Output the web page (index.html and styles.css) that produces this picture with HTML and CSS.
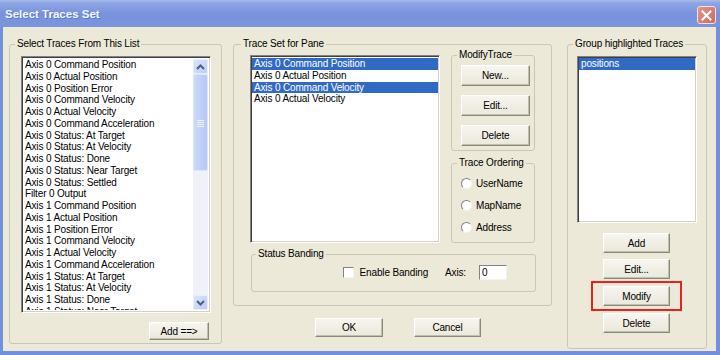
FILE: index.html
```html
<!DOCTYPE html>
<html lang="en">
  <head>
    <meta charset="utf-8" />
    <title>Select Traces Set</title>
    <link rel="stylesheet" href="styles.css">
  </head>
  <body>
    <div class="window">
      <div class="titlebar">
        <span class="title">Select Traces Set</span>
        <span class="close">
          <svg width="11" height="11" viewBox="0 0 11 11">
            <path d="M1.5 1.5 L9.5 9.5 M9.5 1.5 L1.5 9.5" stroke="#fff" stroke-width="2" stroke-linecap="square" />
          </svg>
        </span>
      </div>
      <div class="frame">
        <!-- left column: all available traces -->
        <fieldset class="group src">
          <legend>Select Traces From This List</legend>
          <div class="listbox src-list">
            <ul class="items">
              <li>Axis 0 Command Position</li>
              <li>Axis 0 Actual Position</li>
              <li>Axis 0 Position Error</li>
              <li>Axis 0 Command Velocity</li>
              <li>Axis 0 Actual Velocity</li>
              <li>Axis 0 Command Acceleration</li>
              <li>Axis 0 Status: At Target</li>
              <li>Axis 0 Status: At Velocity</li>
              <li>Axis 0 Status: Done</li>
              <li>Axis 0 Status: Near Target</li>
              <li>Axis 0 Status: Settled</li>
              <li>Filter 0 Output</li>
              <li>Axis 1 Command Position</li>
              <li>Axis 1 Actual Position</li>
              <li>Axis 1 Position Error</li>
              <li>Axis 1 Command Velocity</li>
              <li>Axis 1 Actual Velocity</li>
              <li>Axis 1 Command Acceleration</li>
              <li>Axis 1 Status: At Target</li>
              <li>Axis 1 Status: At Velocity</li>
              <li>Axis 1 Status: Done</li>
              <li>Axis 1 Status: Near Target</li>
            </ul>
            <div class="scrollbar">
              <div class="sb-btn">
                <svg width="9" height="6" viewBox="0 0 9 6"><path d="M1 5 L4.5 1.5 L8 5" fill="none" stroke="#4d6185" stroke-width="2" /></svg>
              </div>
              <div class="sb-thumb">
                <svg width="7" height="8" viewBox="0 0 7 8"><path d="M0 1.5 H7 M0 3.5 H7 M0 5.5 H7 M0 7.5 H7" stroke="#eef3fe" stroke-width="1" /></svg>
              </div>
              <div class="sb-track"></div>
              <div class="sb-btn">
                <svg width="9" height="6" viewBox="0 0 9 6"><path d="M1 1 L4.5 4.5 L8 1" fill="none" stroke="#4d6185" stroke-width="2" /></svg>
              </div>
            </div>
          </div>
          <div class="add-row">
            <button class="btn add">Add ==&gt;</button>
          </div>
        </fieldset>

        <!-- middle column: traces of the pane -->
        <div class="mid">
          <fieldset class="group pane">
            <legend>Trace Set for Pane</legend>
            <div class="pane-row">
              <ul class="listbox pane-list">
                <li class="sel">Axis 0 Command Position</li>
                <li>Axis 0 Actual Position</li>
                <li class="sel">Axis 0 Command Velocity</li>
                <li>Axis 0 Actual Velocity</li>
              </ul>
              <div class="side">
                <fieldset class="group modify">
                  <legend>ModifyTrace</legend>
                  <button class="btn side-btn">New...</button>
                  <button class="btn side-btn">Edit...</button>
                  <button class="btn side-btn">Delete</button>
                </fieldset>
                <fieldset class="group ordering">
                  <legend>Trace Ordering</legend>
                  <label class="radio"><span class="dot"></span>UserName</label>
                  <label class="radio"><span class="dot"></span>MapName</label>
                  <label class="radio"><span class="dot"></span>Address</label>
                </fieldset>
              </div>
            </div>
            <fieldset class="group banding">
              <legend>Status Banding</legend>
              <div class="banding-row">
                <span class="check"></span>
                <span class="check-label">Enable Banding</span>
                <span class="axis-label">Axis:</span>
                <span class="textbox">0</span>
              </div>
            </fieldset>
          </fieldset>
          <div class="dlg-buttons">
            <button class="btn ok">OK</button>
            <button class="btn cancel">Cancel</button>
          </div>
        </div>

        <!-- right column: trace groups -->
        <fieldset class="group groups">
          <legend>Group highlighted Traces</legend>
          <ul class="listbox group-list">
            <li class="sel">positions</li>
          </ul>
          <div class="group-buttons">
            <button class="btn grp-btn">Add</button>
            <button class="btn grp-btn">Edit...</button>
            <div class="marked">
              <button class="btn grp-btn">Modify</button>
            </div>
            <button class="btn grp-btn">Delete</button>
          </div>
        </fieldset>
      </div>
    </div>
  </body>
</html>
```

FILE: styles.css
```css
html,
body {
  margin: 0px;
  padding: 0px;
  overflow: hidden;
}
body {
  width: 720px;
  height: 355px;
  font-family: "Liberation Sans", Arial, sans-serif;
  font-size: 10px;
  letter-spacing: -0.15px;
  color: #000;
  background-color: #7893dc;
}
.window {
  width: 720px;
  height: 355px;
  display: flex;
  flex-direction: column;
}
.titlebar {
  height: 27px;
  flex: none;
  display: flex;
  align-items: center;
  justify-content: space-between;
  padding: 0px 4px 0px 5px;
  box-sizing: border-box;
  background: linear-gradient(#a9bbec 0px, #8ea5e4 3px, #7892dc 14px, #7b95dd 27px);
}
.title {
  color: #f4f7ff;
  font-size: 11.5px;
  font-weight: bold;
  letter-spacing: 0px;
  text-shadow: 1px 1px 0px #5f78c4;
  padding-top: 1px;
}
.close {
  width: 17px;
  height: 16px;
  margin-top: 3px;
  display: flex;
  align-items: center;
  justify-content: center;
  border: 1px solid #f1e2e0;
  border-radius: 3px;
  background: linear-gradient(135deg, #e0958b, #cf6b60);
}
.frame {
  flex: 1;
  display: flex;
  align-items: flex-start;
  gap: 0px;
  background-color: #ece9d8;
  border-left: 3px solid #7390dc;
  border-right: 4px solid #7390dc;
  border-bottom: 4px solid #7390dc;
  padding: 11px 9px 0px 6px;
}

/* group boxes */
.group {
  margin: 0px;
  min-width: 0px;
  border: 1px solid #cac7b6;
  border-radius: 3px;
  box-sizing: border-box;
}
.group legend {
  padding: 0px 2px;
  line-height: 12px;
  font-size: 10px;
}
.src {
  width: 213px;
  padding: 6px 10px 3px 11px;
}
.src legend {
  margin-left: -6px;
}
.mid {
  width: 319px;
  margin-left: 11px;
  display: flex;
  flex-direction: column;
}
.pane {
  width: 319px;
  padding: 5px 16px 13px 16px;
}
.pane legend {
  margin-left: -9px;
}
.groups {
  width: 140px;
  margin-left: 15px;
  padding: 6px 10px 15px 9px;
}
.groups legend {
  margin-left: -4px;
}

/* list boxes */
.listbox {
  margin: 0px;
  padding: 0px;
  list-style: none;
  background-color: #fff;
  border: 1px solid;
  border-color: #848284 #fff #fff #848284;
  box-shadow: inset 1px 1px 0px #404040, inset -1px -1px 0px #d4d0c8;
  box-sizing: border-box;
  overflow: hidden;
}
.listbox li {
  height: 11.75px;
  line-height: 11.75px;
  padding-left: 2px;
  white-space: nowrap;
}
.listbox li.sel {
  background-color: #316ac5;
  color: #fff;
}
.src-list {
  height: 257px;
  display: flex;
  padding: 2px;
}
.items {
  flex: 1;
  margin: 0px;
  padding: 0px;
  list-style: none;
  overflow: hidden;
}
.items li {
  padding-left: 1px;
}
.scrollbar {
  width: 15px;
  display: flex;
  flex-direction: column;
  background-color: #f1f2f9;
}
.sb-btn {
  height: 15px;
  flex: none;
  display: flex;
  align-items: center;
  justify-content: center;
  background: linear-gradient(135deg, #d9e4fd, #bccef8);
  border: 1px solid #e9eefc;
  border-radius: 2px;
  box-sizing: border-box;
}
.sb-thumb {
  height: 97px;
  flex: none;
  display: flex;
  align-items: center;
  justify-content: center;
  background: linear-gradient(90deg, #c9d8fc, #b7caf6);
  border: 1px solid #dfe7fc;
  border-radius: 2px;
  box-sizing: border-box;
}
.sb-track {
  flex: 1;
}
.add-row {
  display: flex;
  justify-content: flex-end;
  padding: 9px 2px 0px 0px;
}
.pane-row {
  display: flex;
  align-items: flex-start;
  gap: 11px;
}
.pane-list {
  width: 191px;
  height: 188px;
  padding: 2px 1px;
}
.side {
  width: 84px;
  margin-top: -6px;
  display: flex;
  flex-direction: column;
  gap: 6px;
}
.modify {
  width: 84px;
  padding: 4px 0px 4px 9px;
  display: flex;
  flex-direction: column;
  gap: 9px;
}
.modify legend,
.ordering legend {
  margin-left: -4px;
}
.ordering {
  width: 84px;
  padding: 3px 0px 4px 9px;
}
.radio {
  height: 22px;
  display: flex;
  align-items: center;
  gap: 4px;
}
.dot {
  width: 11px;
  height: 11px;
  border-radius: 50%;
  border: 1px solid;
  border-color: #848284 #f4f3ee #f4f3ee #848284;
  background-color: #fff;
  box-sizing: border-box;
  margin-top: 1px;
}
.banding {
  width: 285px;
  margin-top: 5px;
  margin-left: 1px;
  padding: 4px 28px 10px 6px;
}
.banding legend {
  margin-left: -2px;
}
.banding-row {
  height: 17px;
  display: flex;
  align-items: center;
  justify-content: flex-end;
}
.check {
  width: 11px;
  height: 11px;
  border: 1px solid;
  border-color: #848284 #f4f3ee #f4f3ee #848284;
  background-color: #fff;
  box-sizing: border-box;
}
.check-label {
  margin-left: 6px;
}
.axis-label {
  margin-left: 17px;
}
.textbox {
  width: 28px;
  height: 15px;
  margin-left: 13px;
  padding-left: 2px;
  line-height: 13px;
  background-color: #fff;
  border: 1px solid;
  border-color: #848284 #f4f3ee #f4f3ee #848284;
  box-sizing: border-box;
}
.dlg-buttons {
  display: flex;
  gap: 31px;
  padding: 12px 0px 0px 82px;
}
.group-list {
  width: 120px;
  height: 167px;
  padding: 1px;
}
.group-buttons {
  display: flex;
  flex-direction: column;
  align-items: center;
  gap: 6px;
  padding-top: 10px;
}
.marked {
  margin: -4px 0px;
  padding: 3px 10px;
  border: 2px solid #e8221e;
}

/* push buttons */
.btn {
  margin: 0px;
  padding: 0px;
  font-family: "Liberation Sans", Arial, sans-serif;
  font-size: 10px;
  letter-spacing: -0.15px;
  color: #000;
  background: linear-gradient(#f6f5ef, #ebe8db);
  border: 1px solid;
  border-color: #fff #8a877b #8a877b #fff;
  box-shadow: inset -1px -1px 0px #c2bfb0;
  box-sizing: border-box;
}
.add {
  width: 60px;
  height: 18px;
}
.side-btn {
  width: 69px;
  height: 21px;
}
.ok {
  width: 68px;
  height: 19px;
}
.cancel {
  width: 67px;
  height: 19px;
}
.grp-btn {
  width: 67px;
  height: 20px;
}
```
